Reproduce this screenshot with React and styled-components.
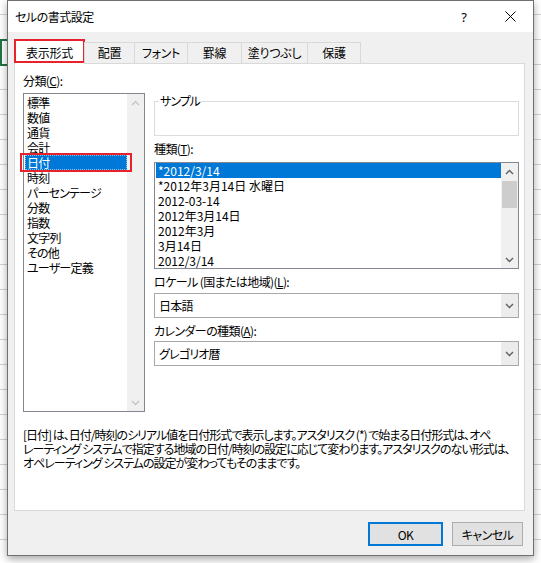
import React from "react";
import styled, { createGlobalStyle } from "styled-components";

const FONT = `"Noto Sans CJK JP", "Noto Sans", sans-serif`;

const GlobalStyle = createGlobalStyle`
  * { box-sizing: border-box; }
  html, body { margin: 0; padding: 0; }
  body {
    width: 541px;
    height: 563px;
    overflow: hidden;
    font-family: ${FONT};
    font-size: 12px;
    font-feature-settings: "palt";
    color: #000;
    background-color: #fff;
    background-image:
      linear-gradient(#217346, #217346),
      linear-gradient(#217346, #217346),
      linear-gradient(#217346, #217346),
      repeating-linear-gradient(to bottom, transparent 0 14px, #d4d4d4 14px 15px, transparent 15px 25px);
    background-size: 2px 27px, 7px 2px, 7px 2px, 100% 100%;
    background-position: 0 39px, 0 39px, 0 64px, 0 0;
    background-repeat: no-repeat;
  }
`;

const Page = styled.div`
  padding-left: 7px;
`;

const Dialog = styled.div`
  width: 527px;
  height: 556px;
  border: 1px solid #707070;
  background: #f0f0f0;
  display: flex;
  flex-direction: column;
  box-shadow: 0 3px 8px rgba(0, 0, 0, 0.35);
`;

const TitleBar = styled.div`
  height: 31px;
  background: #fff;
  display: flex;
  align-items: center;
`;

const Title = styled.div`
  flex: 1;
  padding-left: 7px;
  font-size: 12px;
  line-height: 16px;
  letter-spacing: -0.5px;
`;

const TitleButton = styled.div`
  width: 46px;
  height: 31px;
  display: flex;
  align-items: center;
  justify-content: center;
  font-family: "Noto Sans", sans-serif;
  font-size: 13px;
`;

const Body = styled.div`
  flex: 1;
  display: flex;
  flex-direction: column;
  padding: 8px 8px 0 6px;
`;

const TabStrip = styled.div`
  height: 24px;
  display: flex;
  align-items: flex-end;
  margin-bottom: -1px;
  position: relative;
  z-index: 1;
`;

const Tab = styled.div`
  position: relative;
  width: ${(p) => p.$w}px;
  height: ${(p) => (p.$active ? 24 : 21)}px;
  margin-bottom: ${(p) => (p.$active ? 0 : 1)}px;
  background: ${(p) => (p.$active ? "#fff" : "#f0f0f0")};
  border: 1px solid #d9d9d9;
  border-bottom: none;
  margin-left: ${(p) => (p.$first ? 0 : -1)}px;
  display: flex;
  align-items: center;
  justify-content: center;
  line-height: 16px;
  letter-spacing: -0.3px;
  &::after {
    content: "";
    display: ${(p) => (p.$mark ? "block" : "none")};
    position: absolute;
    inset: -2px -1px 1px -1px;
    border: 2px solid #e8222a;
  }
`;

const Panel = styled.div`
  height: 448px;
  background: #fff;
  border: 1px solid #d9d9d9;
  padding: 9px 5px 0 8px;
  display: flex;
  flex-direction: column;
`;

const Columns = styled.div`
  display: grid;
  grid-template-columns: 122px 365px;
  column-gap: 9px;
`;

const Column = styled.div`
  display: flex;
  flex-direction: column;
`;

const Label = styled.div`
  line-height: 16px;
  height: 16px;
  margin-top: ${(p) => p.$mt || 0}px;
  margin-bottom: ${(p) => p.$mb ?? 4}px;
  white-space: nowrap;
  letter-spacing: -0.6px;
`;

const ListBox = styled.div`
  height: ${(p) => p.$h}px;
  border: 1px solid #828790;
  background: #fff;
  display: flex;
`;

const Items = styled.div`
  flex: 1;
  padding: ${(p) => p.$pt}px 0 0 1px;
  letter-spacing: ${(p) => p.$ls || 0}px;
`;

const Item = styled.div`
  position: relative;
  height: 15px;
  line-height: 15px;
  padding-left: 2px;
  white-space: nowrap;
  background: ${(p) => (p.$sel ? "#0078d7" : "transparent")};
  color: ${(p) => (p.$sel ? "#fff" : "#000")};
  outline: ${(p) => (p.$focus ? "1px dotted rgba(255,255,255,0.55)" : "none")};
  outline-offset: -1px;
  &::after {
    content: "";
    display: ${(p) => (p.$mark ? "block" : "none")};
    position: absolute;
    inset: -2px -5px -2px -5px;
    border: 2px solid #e8222a;
  }
`;

const ScrollBar = styled.div`
  width: 17px;
  background: #f0f0f0;
  display: flex;
  flex-direction: column;
  align-items: center;
`;

const ArrowBtn = styled.div`
  width: 17px;
  height: 17px;
  display: flex;
  align-items: center;
  justify-content: center;
  color: ${(p) => (p.$disabled ? "#c4c4c4" : "#606060")};
`;

const Thumb = styled.div`
  width: 15px;
  height: 27px;
  margin-top: 1px;
  background: #cdcdcd;
`;

const Spacer = styled.div`
  flex: 1;
`;

const SampleBox = styled.fieldset`
  margin: 21px 0 0 0;
  padding: 0;
  border: 1px solid #dcdcdc;
  min-width: 0;
  legend {
    margin-left: 4px;
    padding: 0 1px;
    line-height: 14px;
    letter-spacing: -1px;
  }
`;

const SampleContent = styled.div`
  height: 27px;
`;

const Select = styled.div`
  height: 25px;
  border: 1px solid #a8a8a8;
  background: #fff;
  display: flex;
`;

const SelectValue = styled.div`
  flex: 1;
  padding-left: 4px;
  line-height: 23px;
  letter-spacing: -0.8px;
`;

const DropBtn = styled.div`
  width: 17px;
  background: #ececec;
  display: flex;
  align-items: center;
  justify-content: center;
  color: #606060;
`;

const Description = styled.p`
  margin: 16px 0 0 0;
  line-height: 14px;
  white-space: nowrap;
  letter-spacing: -1px;
`;

const Footer = styled.div`
  display: flex;
  justify-content: flex-end;
  gap: 9px;
  padding: 11px 2px 9px 0;
`;

const Button = styled.button`
  width: ${(p) => p.$w}px;
  height: 24px;
  background: #e1e1e1;
  border: ${(p) => (p.$default ? "2px solid #0078d7" : "1px solid #adadad")};
  font-family: ${FONT};
  font-feature-settings: "palt";
  font-size: 12px;
  letter-spacing: -0.5px;
  color: #000;
  padding: 0;
`;

const Chevron = ({ up }) => (
  <svg width="9" height="6" viewBox="0 0 9 6">
    <path
      d={up ? "M1 5 L4.5 1.5 L8 5" : "M1 1 L4.5 4.5 L8 1"}
      fill="none"
      stroke="currentColor"
      strokeWidth="1.4"
    />
  </svg>
);

const Close = () => (
  <svg width="11" height="11" viewBox="0 0 11 11">
    <path d="M0.5 0.5 L10.5 10.5 M10.5 0.5 L0.5 10.5" stroke="#000" strokeWidth="1" />
  </svg>
);

const tabs = [
  { t: "表示形式", w: 71, active: true },
  { t: "配置", w: 51 },
  { t: "フォント", w: 54 },
  { t: "罫線", w: 55 },
  { t: "塗りつぶし", w: 67 },
  { t: "保護", w: 54 },
];

const categories = [
  "標準",
  "数値",
  "通貨",
  "会計",
  "日付",
  "時刻",
  "パーセンテージ",
  "分数",
  "指数",
  "文字列",
  "その他",
  "ユーザー定義",
];

const types = [
  "*2012/3/14",
  "*2012年3月14日 水曜日",
  "2012-03-14",
  "2012年3月14日",
  "2012年3月",
  "3月14日",
  "2012/3/14",
];

export default function App() {
  return (
    <>
      <GlobalStyle />
      <Page>
        <Dialog>
          <TitleBar>
            <Title>セルの書式設定</Title>
            <TitleButton>?</TitleButton>
            <TitleButton>
              <Close />
            </TitleButton>
          </TitleBar>
          <Body>
            <TabStrip>
              {tabs.map((tb, i) => (
                <Tab key={tb.t} $w={tb.w} $active={tb.active} $mark={tb.active} $first={i === 0}>
                  {tb.t}
                </Tab>
              ))}
            </TabStrip>
            <Panel>
              <Columns>
                <Column>
                  <Label>
                    分類(<u>C</u>):
                  </Label>
                  <ListBox $h={319}>
                    <Items $pt={1} $ls={-0.8}>
                      {categories.map((c) => (
                        <Item key={c} $sel={c === "日付"} $focus={c === "日付"} $mark={c === "日付"}>
                          {c}
                        </Item>
                      ))}
                    </Items>
                    <ScrollBar>
                      <ArrowBtn $disabled>
                        <Chevron up />
                      </ArrowBtn>
                      <Spacer />
                      <ArrowBtn $disabled>
                        <Chevron />
                      </ArrowBtn>
                    </ScrollBar>
                  </ListBox>
                </Column>
                <Column>
                  <SampleBox>
                    <legend>サンプル</legend>
                    <SampleContent />
                  </SampleBox>
                  <Label $mt={5} $mb={5}>
                    種類(<u>T</u>):
                  </Label>
                  <ListBox $h={107}>
                    <Items $pt={0}>
                      {types.map((t, i) => (
                        <Item key={t + i} $sel={i === 0}>
                          {t}
                        </Item>
                      ))}
                    </Items>
                    <ScrollBar>
                      <ArrowBtn>
                        <Chevron up />
                      </ArrowBtn>
                      <Thumb />
                      <Spacer />
                      <ArrowBtn>
                        <Chevron />
                      </ArrowBtn>
                    </ScrollBar>
                  </ListBox>
                  <Label $mt={5} $mb={3}>
                    ロケール (国または地域)(<u>L</u>):
                  </Label>
                  <Select>
                    <SelectValue>日本語</SelectValue>
                    <DropBtn>
                      <Chevron />
                    </DropBtn>
                  </Select>
                  <Label $mt={5} $mb={2}>
                    カレンダーの種類(<u>A</u>):
                  </Label>
                  <Select>
                    <SelectValue>グレゴリオ暦</SelectValue>
                    <DropBtn>
                      <Chevron />
                    </DropBtn>
                  </Select>
                </Column>
              </Columns>
              <Description>
                [日付] は、日付/時刻のシリアル値を日付形式で表示します。アスタリスク (*) で始まる日付形式は、オペ
                <br />
                レーティング システムで指定する地域の日付/時刻の設定に応じて変わります。アスタリスクのない形式は、
                <br />
                オペレーティング システムの設定が変わってもそのままです。
              </Description>
            </Panel>
            <Footer>
              <Button $w={75} $default>
                OK
              </Button>
              <Button $w={71}>キャンセル</Button>
            </Footer>
          </Body>
        </Dialog>
      </Page>
    </>
  );
}
